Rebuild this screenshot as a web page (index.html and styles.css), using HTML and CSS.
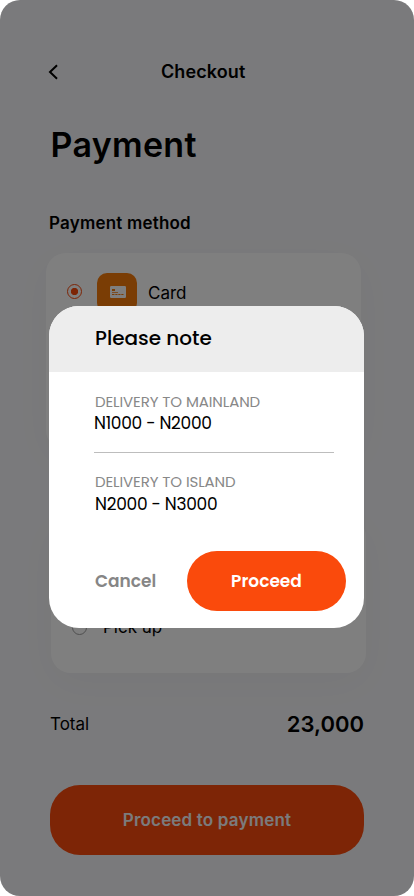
FILE: index.html
```html
<!DOCTYPE html>
<html lang="en">
<head>
<meta charset="utf-8">
<title>Checkout</title>
<link rel="stylesheet" href="styles.css">
</head>
<body>
<div class="screen">
  <header class="topbar">
    <svg class="back" width="10" height="16" viewBox="0 0 10 16"><path d="M8.3 2L2 8l6.3 6" fill="none" stroke="#000" stroke-width="2" stroke-linecap="square" stroke-linejoin="miter"/></svg>
    <span class="topbar-title">Checkout</span>
  </header>
  <h1 class="title">Payment</h1>
  <h2 class="section">Payment method</h2>
  <section class="card card-method">
    <div class="option">
      <span class="radio radio-on"></span>
      <span class="tile">
        <svg width="16" height="12" viewBox="0 0 16 12"><rect width="16" height="12" rx="1.2" fill="#fff"/><path d="M2 3h3v2H2zM2 6h6v.8H2zM2 8h2.5v.9H2zM5.3 8h2.2v.9H5.3zM8.3 8h2.2v.9H8.3zM11.3 8h2.2v.9h-2.2z" fill="#f47b0a"/></svg>
      </span>
      <span class="option-label">Card</span>
    </div>
  </section>
  <section class="card card-delivery">
    <div class="option pickup">
      <span class="radio"></span>
      <span class="pickup-label">Pick up</span>
    </div>
  </section>
  <div class="total"><span class="total-label">Total</span><span class="total-value">23,000</span></div>
  <div class="pay"><span>Proceed to payment</span></div>
  <div class="scrim"></div>
  <div class="dialog">
    <div class="dialog-head"><span>Please note</span></div>
    <div class="dialog-body">
      <div class="row first">
        <div class="label"><span>DELIVERY TO MAINLAND</span></div>
        <div class="price"><span>N1000 - N2000</span></div>
      </div>
      <div class="row">
        <div class="label"><span>DELIVERY TO ISLAND</span></div>
        <div class="price second"><span>N2000 - N3000</span></div>
      </div>
    </div>
    <div class="actions">
      <span class="cancel">Cancel</span>
      <span class="proceed"><span>Proceed</span></span>
    </div>
  </div>
</div>
</body>
</html>
```

FILE: styles.css
```css
* { box-sizing: border-box; }
body { margin: 0; background: #fff; font-family: Inter, "Liberation Sans", sans-serif; color: #000; }
.screen { position: relative; width: 414px; height: 896px; overflow: hidden; border-radius: 20px; background: #f5f5f8; }
.topbar { display: flex; align-items: center; height: 24px; margin: 60px 0 0 48px; }
.back { flex: none; }
.topbar-title { margin-left: 103px; font-size: 18px; font-weight: 560; line-height: 24px; letter-spacing: 0.1px; }
.title { margin: 39px 0 0 50.5px; font-size: 34px; line-height: 44px; font-weight: 560; letter-spacing: 0.3px; }
.section { margin: 44px 0 0 49px; font-size: 17px; line-height: 24px; font-weight: 560; letter-spacing: 0.2px; }
.card { width: 315px; border-radius: 20px; background: #fff; box-shadow: 0 10px 40px rgba(0,0,0,.03); }
.card-method { height: 197px; margin: 18px 0 0 46px; padding: 20px 20px 0; }
.option { display: flex; align-items: center; height: 40px; }
.radio { width: 15px; height: 15px; border: 1px solid #9f9f9f; border-radius: 50%; }
.radio-on { margin: -3px 0 0 1px; border-color: #fa4a0c; background: radial-gradient(circle, #fa4a0c 0 3.3px, transparent 4px); }
.tile { display: flex; align-items: center; justify-content: center; width: 40px; height: 40px; margin-left: 15px; padding: 0 0 2px 2px; border-radius: 10px; background: #f47b0a; }
.option-label { margin-left: 11px; font-size: 17px; }
.card-delivery { height: 156px; margin: 67px 0 0 51px; padding: 90px 21px 0; }
.pickup-label { margin-left: 16px; font-size: 17px; }
.total { display: flex; align-items: center; justify-content: space-between; width: 314px; height: 30px; margin: 36px 0 0 50px; }
.total-label { font-size: 17px; }
.total-value { font-size: 22px; font-weight: 600; }
.pay { display: flex; align-items: center; justify-content: center; width: 314px; height: 70px; margin: 46px 0 0 50px; border-radius: 30px; background: #fa4a0c; color: #f6f6f9; font-size: 17px; font-weight: 560; letter-spacing: 0.18px; }
.scrim { position: absolute; inset: 0; background: rgba(0,0,0,.5); }
.dialog { position: absolute; left: 49px; top: 306px; width: 315px; height: 322px; overflow: hidden; border-radius: 30px; background: #fff; font-family: Poppins, Inter, sans-serif; }
.dialog-head { height: 66px; padding-left: 46px; background: #ededed; font-size: 20px; line-height: 64px; font-weight: 500; }
.dialog-body { margin: 0 30px 0 45px; }
.row { padding-top: 19px; height: 80px; }
.row:not(.first) { padding-top: 18px; }
.row.first { height: 81px; border-bottom: 1px solid #bdbdbd; }
.label { height: 21px; padding-left: 1px; font-size: 15px; line-height: 21px; letter-spacing: -0.1px; color: #888; }
.price { height: 22px; font-size: 17px; line-height: 22px; letter-spacing: -0.3px; }
.price.second { padding: 1px 0 0 1px; }
.actions { display: flex; align-items: center; justify-content: space-between; height: 60px; margin: 18px 18px 0 46px; font-size: 17px; font-weight: 600; }
.cancel { color: #868686; }
.proceed { display: flex; align-items: center; justify-content: center; width: 159px; height: 60px; border-radius: 30px; background: #fa4a0c; color: #fff; }
```
